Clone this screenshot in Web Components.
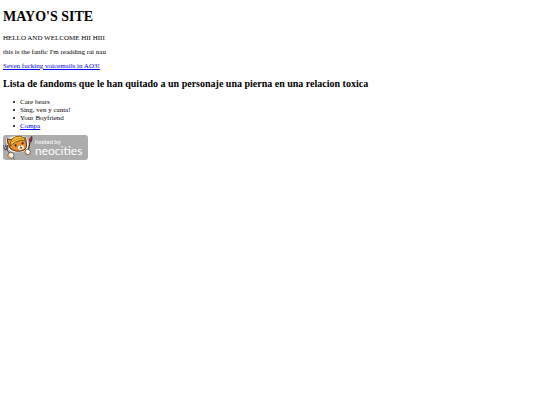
<!DOCTYPE html>
<html lang="es">
<head>
<meta charset="utf-8">
<title>MAYO'S SITE</title>
<style>
	body {
		margin: 9px 3px;
		background: #fff;
		color: #000;
		font-family: "Liberation Serif", "Times New Roman", serif;
		font-size: 7px;
		line-height: 8px;
	}
</style>
</head>
<body>
<mayo-site>
	<span slot="title">MAYO'S SITE</span>
	<site-text>HELLO AND WELCOME HII HIII</site-text>
	<site-text>this is the fanfic I'm readding rai nau</site-text>
	<site-text><site-link to="#ao3">Seven fucking voicemails in AO3!</site-link></site-text>
	<fandom-list></fandom-list>
	<neocities-badge></neocities-badge>
</mayo-site>
<script>
class MayoSite extends HTMLElement {
	constructor(){
		super();
		this.attachShadow({mode:"open"});
		this.shadowRoot.innerHTML = /*html*/`
			<style>
				:host {
					display: block;
				}
				h1 {
					margin: 0 0 9px;
					font-size: 14px;
					line-height: 16px;
				}
			</style>
			<h1><slot name="title"></slot></h1>
			<slot></slot>
		`;
	}
}
customElements.define("mayo-site",MayoSite);

class SiteText extends HTMLElement {
	constructor(){
		super();
		this.attachShadow({mode:"open"});
		this.shadowRoot.innerHTML = /*html*/`
			<style>
				:host {
					display: block;
					margin-bottom: 6px;
				}
				p {
					margin: 0;
				}
			</style>
			<p><slot></slot></p>
		`;
	}
}
customElements.define("site-text",SiteText);

class SiteLink extends HTMLElement {
	constructor(){
		super();
		this.attachShadow({mode:"open"});
		this.shadowRoot.innerHTML = /*html*/`
			<style>
				:host {
					display: inline;
				}
				a {
					color: #0000ee;
				}
			</style>
			<a><slot></slot></a>
		`;
		this.shadowRoot.querySelector("a").href = this.getAttribute("to");
	}
}
customElements.define("site-link",SiteLink);

class FandomList extends HTMLElement {
	constructor(){
		super();
		this.attachShadow({mode:"open"});
		this.shadowRoot.innerHTML = /*html*/`
			<style>
				:host {
					display: block;
				}
				h2 {
					margin: 8px 0;
					font-size: 10px;
					line-height: 12px;
				}
				ul {
					margin: 0 0 5px;
					padding-left: 10px;
					list-style: none;
				}
				li {
					display: flex;
					align-items: center;
					gap: 5px;
				}
				li::before {
					content: "";
					width: 2px;
					height: 2px;
					border-radius: 50%;
					background: currentColor;
				}
			</style>
			<h2>Lista de fandoms que le han quitado a un personaje una pierna en una relacion toxica</h2>
			<ul>
				<li>Care bears</li>
				<li>Sing, ven y canta!</li>
				<li>Your Boyfriend</li>
				<li><site-link to="#compa">Compa</site-link></li>
			</ul>
		`;
	}
}
customElements.define("fandom-list",FandomList);

class NeocitiesBadge extends HTMLElement {
	constructor(){
		super();
		this.attachShadow({mode:"open"});
		this.shadowRoot.innerHTML = /*html*/`
			<style>
				:host {
					display: block;
				}
				a {
					display: inline-block;
					vertical-align: top;
				}
				svg {
					display: block;
				}
				text {
					font-family: Lato, "Open Sans", sans-serif;
					fill: #fff;
				}
			</style>
			<a href="#neocities" aria-label="hosted by neocities">
				<svg width="85" height="25" viewBox="0 0 85 25">
					<rect width="85" height="25" rx="3" fill="#acacac"/>
					<!-- white outline behind the mascot -->
					<path d="M5 11 4 4 9 3Q13 1 18 2L23 3 24 8Q25 12 22 15Q17 17 11 16Q6 15 5 11ZM28 2 25 16M1 11 8 20 11 24" fill="#fff" stroke="#fff" stroke-width="2" stroke-linejoin="round"/>
					<!-- paintbrush -->
					<path d="M27.3 6 24.7 18" stroke="#5b3626" stroke-width="1.5"/>
					<path d="M26.4 6Q26.2 3.5 28.8 1.2Q29.6 4 28.3 6.6Z" fill="#a8203a" stroke="#5b2026" stroke-width=".8"/>
					<!-- fork -->
					<path d="M.8 10.5Q.8 15 3.8 14.6Q5.6 13.6 4.2 10M2.4 10 3.8 14.6 11.5 24.5" fill="none" stroke="#4c4c50" stroke-width="1.2"/>
					<!-- cat head -->
					<path d="M5 8.5 4.2 4 8.5 4.5Q13 2 18 2.5L22.6 3 23.3 8Q24.5 13 21 15Q15.5 17.6 9.8 15Q5.6 13 5.8 9Z" fill="#ec912f" stroke="#5f3415" stroke-width="1.1"/>
					<path d="M15 12Q16.5 9.5 19.5 10.3Q22 12 20.5 13.8Q18 15.6 15.8 14.6Q14.4 13.5 15 12Z" fill="#fff6e8"/>
					<!-- cap -->
					<path d="M7.3 8Q8 3.2 12.5 1.6Q17.5 .2 20.5 2.5L22.8 5.6Q17 4.6 12.5 7.2Q9.6 9 7.6 11Z" fill="#f1bd35" stroke="#7a5614" stroke-width=".9"/>
					<path d="M9.2 6.5Q13.5 3.2 20 3.6" fill="none" stroke="#b57c22" stroke-width=".7"/>
					<ellipse cx="12.6" cy="10.5" rx="1" ry="1.3" fill="#3f261b"/>
					<ellipse cx="19.6" cy="8.3" rx=".9" ry="1.2" fill="#3f261b"/>
					<path d="M16.6 10.6 18.6 10.2 17.9 11.6ZM16.3 12.6 19.4 12 18.4 14Z" fill="#52291f"/>
					<!-- paws -->
					<circle cx="8" cy="20.3" r="3" fill="#fff" stroke="#5c4638" stroke-width=".8"/>
					<path d="M5.3 19Q5 22 7.8 23" fill="none" stroke="#ec912f" stroke-width="1.2"/>
					<circle cx="24.7" cy="17" r="2.7" fill="#fff" stroke="#5c4638" stroke-width=".8"/>
					<path d="M22.6 16Q22 18.6 24.2 19.2" fill="none" stroke="#ec912f" stroke-width="1"/>
					<text x="32" y="9" font-size="6">hosted by</text>
					<text x="32" y="20" font-size="12">neocities</text>
				</svg>
			</a>
		`;
	}
}
customElements.define("neocities-badge",NeocitiesBadge);
</script>
</body>
</html>
